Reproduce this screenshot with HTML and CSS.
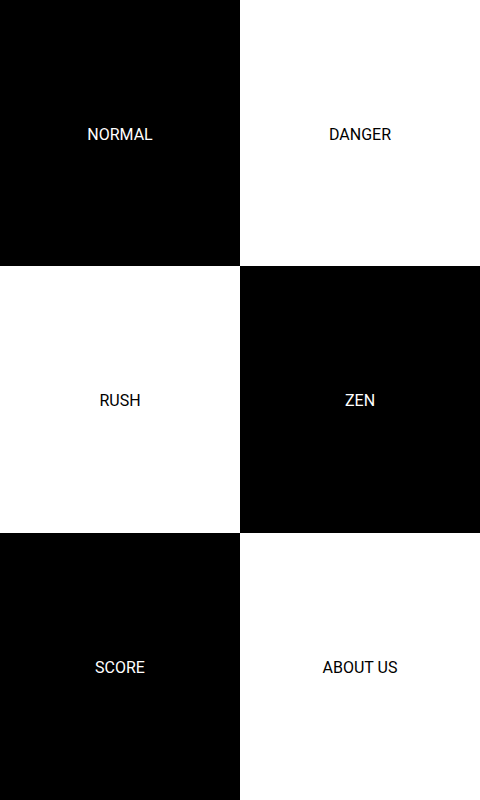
FILE: index.html
```html
<!DOCTYPE html>
<html>
<head>
<meta charset="utf-8">
<link rel="stylesheet" href="styles.css">
</head>
<body>
<div class="grid">
  <div class="tile dark">NORMAL</div>
  <div class="tile light">DANGER</div>
  <div class="tile light">RUSH</div>
  <div class="tile dark">ZEN</div>
  <div class="tile dark">SCORE</div>
  <div class="tile light">ABOUT US</div>
</div>
</body>
</html>
```
FILE: styles.css
```css
html, body {
  margin: 0;
  padding: 0;
}
.grid {
  width: 480px;
  height: 800px;
  display: grid;
  grid-template-columns: 240px 240px;
  grid-template-rows: 266px 267px 267px;
}
.tile {
  display: flex;
  align-items: center;
  justify-content: center;
  padding-top: 2px;
  font-family: Roboto, "Liberation Sans", sans-serif;
  font-size: 16px;
}
.dark {
  background: #000;
  color: #fff;
}
.light {
  background: #fff;
  color: #000;
}
```
